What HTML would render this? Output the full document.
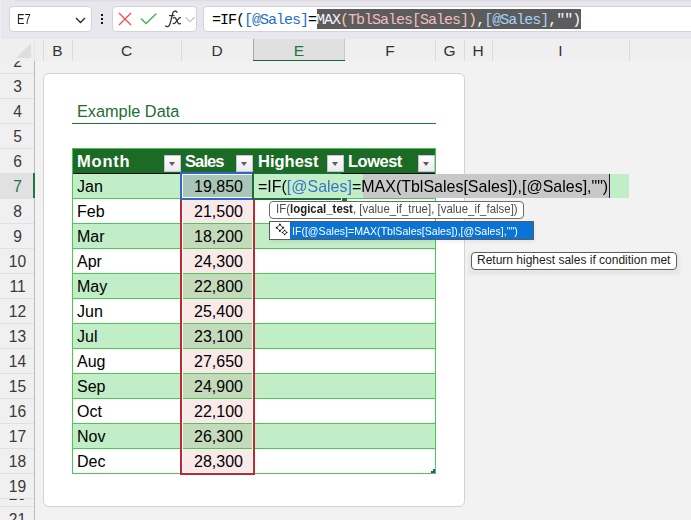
<!DOCTYPE html>
<html><head><meta charset="utf-8">
<style>
*{margin:0;padding:0;box-sizing:border-box}
html,body{width:691px;height:520px;overflow:hidden;background:#f2f2f2;font-family:"Liberation Sans",sans-serif}
body{position:relative}
.a{position:absolute}
.box{position:absolute;background:#fff;border:1px solid #d2d2d8;border-radius:4px}
.mono{font-family:"Liberation Mono",monospace}
.vl{position:absolute;width:1px;background:#dadada}
.hl{position:absolute;height:1px;background:#e0e0e0}
.ch{position:absolute;top:39px;height:22px;font-size:15.5px;color:#333;text-align:center;line-height:23px}
.rh{position:absolute;left:0;width:35px;height:25px;font-size:15.6px;color:#3a3a3a;text-align:center;line-height:27px}
.cell{position:absolute;font-size:16px;color:#000;line-height:25px;height:25px;white-space:nowrap}
.band{position:absolute;left:72px;width:364px;height:25px;background:#c1edc7}
.rl{position:absolute;left:72px;width:364px;height:1px;background:#4cc854}
.th{position:absolute;font-size:16.5px;font-weight:bold;color:#fff;line-height:25px;top:149px;white-space:nowrap}
.dd{position:absolute;top:155px;width:17px;height:17px;background:linear-gradient(#fefefe,#ececf0);border:1px solid #c4c2cc}
.dd:after{content:"";position:absolute;left:4px;top:6px;border-left:3.8px solid transparent;border-right:3.8px solid transparent;border-top:4.2px solid #5c5c5c}
.num{text-align:right;width:62px;left:181px}
</style></head><body>
<!-- top bar -->
<div class="a" style="left:0;top:0;width:691px;height:39px;background:#e7e7ed"></div>
<div class="a" style="left:14px;top:0;width:677px;height:2px;background:linear-gradient(#dcdce2,#e4e4ea)"></div>
<div class="a" style="left:0;top:0;width:1px;height:39px;background:#eeeef2"></div>
<div class="box" style="left:9px;top:6px;width:83px;height:26px"></div>
<div class="a" style="left:16.5px;top:11px;font-size:14px;color:#222;transform-origin:0 0;transform:scaleX(0.8)">E7</div>
<svg class="a" style="left:75px;top:17px" width="11" height="8"><path d="M1 1 L5.5 5.5 L10 1" fill="none" stroke="#222" stroke-width="1.25"/></svg>
<div class="a" style="left:101px;top:14px;width:2px;height:2px;background:#111"></div><div class="a" style="left:101px;top:18px;width:2px;height:2px;background:#111"></div><div class="a" style="left:101px;top:22px;width:2px;height:2px;background:#111"></div>
<div class="box" style="left:112px;top:6px;width:85px;height:26px"></div>
<svg class="a" style="left:118px;top:12px" width="14" height="14"><path d="M1 1 L13 13 M13 1 L1 13" stroke="#f04656" stroke-width="1.25"/></svg>
<svg class="a" style="left:140px;top:12px" width="18" height="14"><path d="M1 6.5 L6 11.5 L16.5 1.5" fill="none" stroke="#3cb548" stroke-width="1.3"/></svg>
<svg class="a" style="left:164px;top:9px" width="18" height="19"><path d="M13 3.2 C12.2 1.5 9.6 1.5 8.8 4 L6 14.8 C5.4 17.4 3.4 18.2 1.6 17" fill="none" stroke="#333" stroke-width="1.3" stroke-linecap="round"/><path d="M5 6.6 L10.6 6.6" stroke="#333" stroke-width="1.1"/><path d="M9.2 9 C10.4 8.2 11.6 8.6 12.2 10.2 L13.8 13.6 C14.4 15 15.4 15.2 16.4 14.4" fill="none" stroke="#333" stroke-width="1.25" stroke-linecap="round"/><path d="M16.4 8.6 C15.6 8.4 15.2 8.8 14.6 9.6 L11.2 13.8 C10.6 14.6 10 14.8 9.2 14.4" fill="none" stroke="#333" stroke-width="1.25" stroke-linecap="round"/></svg>
<svg class="a" style="left:184px;top:16px" width="12" height="8"><path d="M1.5 1.2 L6 5.7 L10.5 1.2" fill="none" stroke="#999" stroke-width="1"/></svg>
<div class="box" style="left:203px;top:6px;width:500px;height:26px"></div>
<div class="a" style="left:317px;top:9px;width:264px;height:20px;background:#5c5c5c"></div>
<div class="a mono" style="left:212px;top:10.5px;height:20px;line-height:20px;font-size:15px;letter-spacing:-1px;white-space:pre;color:#000">=IF(<span style="color:#1f6fc5">[@Sales]</span>=<span style="color:#f4f8ff">MAX<span style="color:#f8c8a0">(</span><span style="color:#f4bcc4">TblSales[Sales]</span><span style="color:#f8c8a0">)</span>,<span style="color:#a4d2fa">[@Sales]</span>,"")</span></div>

<!-- column header -->
<div class="a" style="left:0;top:39px;width:691px;height:22px;background:#efefef"></div>
<div class="a" style="left:253px;top:39px;width:92px;height:21px;background:#e0e0e0"></div>
<div class="a" style="left:253px;top:60px;width:92px;height:1px;background:#1a6b38"></div>
<svg class="a" style="left:16px;top:43px" width="16" height="16"><path d="M15 0 L15 15 L0 15 Z" fill="#dedede"/></svg>
<div class="vl" style="left:34px;top:40px;height:21px;background:#e4e4e4"></div>
<div class="vl" style="left:43px;top:40px;height:21px"></div>
<div class="vl" style="left:72px;top:40px;height:21px"></div>
<div class="vl" style="left:181px;top:40px;height:21px"></div>
<div class="vl" style="left:253px;top:39px;height:21px;background:#a8a8a8"></div>
<div class="vl" style="left:344px;top:39px;height:21px;background:#c8c8c8"></div>
<div class="vl" style="left:435px;top:40px;height:21px"></div>
<div class="vl" style="left:464px;top:40px;height:21px"></div>
<div class="vl" style="left:492px;top:40px;height:21px"></div>
<div class="vl" style="left:629px;top:40px;height:21px"></div>
<div class="ch" style="left:43px;width:29px">B</div>
<div class="ch" style="left:72px;width:109px">C</div>
<div class="ch" style="left:181px;width:72px">D</div>
<div class="ch" style="left:253px;width:92px;color:#217346">E</div>
<div class="ch" style="left:345px;width:90px">F</div>
<div class="ch" style="left:435px;width:29px">G</div>
<div class="ch" style="left:464px;width:28px">H</div>
<div class="ch" style="left:492px;width:137px">I</div>

<!-- row header -->
<div class="a" style="left:0;top:61px;width:34px;height:459px;background:#f0f0f0;overflow:hidden">
  <div class="rh" style="top:-13px">2</div>
  <div class="hl" style="left:0;top:12px;width:34px"></div>
  <div class="rh" style="top:12px">3</div>
  <div class="hl" style="left:0;top:37px;width:34px"></div>
  <div class="rh" style="top:37px">4</div>
  <div class="hl" style="left:0;top:62px;width:34px"></div>
  <div class="rh" style="top:62px">5</div>
  <div class="hl" style="left:0;top:87px;width:34px"></div>
  <div class="rh" style="top:87px">6</div>
  <div class="hl" style="left:0;top:112px;width:34px"></div>
  <div class="a" style="left:0;top:112px;width:34px;height:25px;background:#e1e1e1"></div>
  <div class="rh" style="top:112px;color:#217346">7</div>
  <div class="hl" style="left:0;top:137px;width:34px"></div>
  <div class="rh" style="top:137px">8</div>
  <div class="hl" style="left:0;top:162px;width:34px"></div>
  <div class="rh" style="top:162px">9</div>
  <div class="hl" style="left:0;top:187px;width:34px"></div>
  <div class="rh" style="top:187px">10</div>
  <div class="hl" style="left:0;top:212px;width:34px"></div>
  <div class="rh" style="top:212px">11</div>
  <div class="hl" style="left:0;top:237px;width:34px"></div>
  <div class="rh" style="top:237px">12</div>
  <div class="hl" style="left:0;top:262px;width:34px"></div>
  <div class="rh" style="top:262px">13</div>
  <div class="hl" style="left:0;top:287px;width:34px"></div>
  <div class="rh" style="top:287px">14</div>
  <div class="hl" style="left:0;top:312px;width:34px"></div>
  <div class="rh" style="top:312px">15</div>
  <div class="hl" style="left:0;top:337px;width:34px"></div>
  <div class="rh" style="top:337px">16</div>
  <div class="hl" style="left:0;top:362px;width:34px"></div>
  <div class="rh" style="top:362px">17</div>
  <div class="hl" style="left:0;top:387px;width:34px"></div>
  <div class="rh" style="top:387px">18</div>
  <div class="hl" style="left:0;top:412px;width:34px"></div>
  <div class="rh" style="top:412px">19</div>
  <div class="hl" style="left:0;top:437px;width:34px"></div>
  <div class="a" style="left:0;top:438px;width:34px;height:7px;overflow:hidden"><div class="rh" style="top:-18px">20</div></div>
  <div class="hl" style="left:0;top:445px;width:34px"></div>
  <div class="rh" style="top:445px">21</div>
</div>
<div class="vl" style="left:34px;top:61px;height:459px;background:#bdbdbd"></div>
<div class="a" style="left:33px;top:173px;width:2px;height:25px;background:#217346"></div>

<!-- card -->
<div class="a" style="left:43px;top:73px;width:422px;height:434px;background:#fff;border:1px solid #d2d2d2;border-radius:6px"></div>
<div class="a" style="left:77px;top:99px;font-size:16.3px;color:#1b6e35;line-height:25px">Example Data</div>
<div class="a" style="left:72px;top:123px;width:364px;height:1px;background:#217346"></div>

<!-- table -->
<div class="a" style="left:72px;top:148px;width:364px;height:25px;background:#1b6a25;border-top:1px solid #4cc050;border-left:1px solid #4cc050;border-right:1px solid #4cc050"></div>
<div class="th" style="left:77px;letter-spacing:0.8px">Month</div>
<div class="th" style="left:185px;letter-spacing:-0.9px">Sales</div>
<div class="th" style="left:258px">Highest</div>
<div class="th" style="left:348px;letter-spacing:-0.5px">Lowest</div>
<div class="dd" style="left:164px"></div>
<div class="dd" style="left:236px"></div>
<div class="dd" style="left:327px"></div>
<div class="dd" style="left:418px"></div>

<div class="band" style="top:173px"></div>
<div class="band" style="top:223px"></div>
<div class="band" style="top:273px"></div>
<div class="band" style="top:323px"></div>
<div class="band" style="top:373px"></div>
<div class="band" style="top:423px"></div>
<div class="rl" style="top:198px"></div>
<div class="rl" style="top:223px"></div>
<div class="rl" style="top:248px"></div>
<div class="rl" style="top:273px"></div>
<div class="rl" style="top:298px"></div>
<div class="rl" style="top:323px"></div>
<div class="rl" style="top:348px"></div>
<div class="rl" style="top:373px"></div>
<div class="rl" style="top:398px"></div>
<div class="rl" style="top:423px"></div>
<div class="rl" style="top:448px"></div>
<div class="rl" style="top:473px"></div>
<div class="a" style="left:72px;top:173px;width:364px;height:1px;background:#111"></div>
<div class="a" style="left:72px;top:173px;width:1px;height:301px;background:#4cc854"></div>
<div class="a" style="left:435px;top:173px;width:1px;height:301px;background:#4cc854"></div>
<div class="a" style="left:433px;top:469px;width:2px;height:4px;background:#3c4c9c"></div><div class="a" style="left:431px;top:471px;width:2px;height:2px;background:#3c4c9c"></div>

<!-- D overlays -->
<div class="a" style="left:180px;top:172px;width:75px;height:303px;border:2px solid #c0282f;background:#fff"></div>
<div class="a" style="left:183px;top:200px;width:69px;height:23px;background:#f9e9e9"></div>
<div class="a" style="left:183px;top:224px;width:69px;height:24px;background:#c4dbbb"></div>
<div class="a" style="left:183px;top:223px;width:69px;height:1px;background:#4cc854"></div>
<div class="a" style="left:183px;top:249px;width:69px;height:24px;background:#f9e9e9"></div>
<div class="a" style="left:183px;top:248px;width:69px;height:1px;background:#4cc854"></div>
<div class="a" style="left:183px;top:274px;width:69px;height:24px;background:#c4dbbb"></div>
<div class="a" style="left:183px;top:273px;width:69px;height:1px;background:#4cc854"></div>
<div class="a" style="left:183px;top:299px;width:69px;height:24px;background:#f9e9e9"></div>
<div class="a" style="left:183px;top:298px;width:69px;height:1px;background:#4cc854"></div>
<div class="a" style="left:183px;top:324px;width:69px;height:24px;background:#c4dbbb"></div>
<div class="a" style="left:183px;top:323px;width:69px;height:1px;background:#4cc854"></div>
<div class="a" style="left:183px;top:349px;width:69px;height:24px;background:#f9e9e9"></div>
<div class="a" style="left:183px;top:348px;width:69px;height:1px;background:#4cc854"></div>
<div class="a" style="left:183px;top:374px;width:69px;height:24px;background:#c4dbbb"></div>
<div class="a" style="left:183px;top:373px;width:69px;height:1px;background:#4cc854"></div>
<div class="a" style="left:183px;top:399px;width:69px;height:24px;background:#f9e9e9"></div>
<div class="a" style="left:183px;top:398px;width:69px;height:1px;background:#4cc854"></div>
<div class="a" style="left:183px;top:424px;width:69px;height:24px;background:#c4dbbb"></div>
<div class="a" style="left:183px;top:423px;width:69px;height:1px;background:#4cc854"></div>
<div class="a" style="left:183px;top:449px;width:69px;height:23px;background:#f9e9e9"></div>
<div class="a" style="left:183px;top:448px;width:69px;height:1px;background:#4cc854"></div>
<div class="a" style="left:180px;top:172px;width:74px;height:28px;border:2px solid #3366cc;background:#fff"></div>
<div class="a" style="left:183px;top:175px;width:71px;height:22px;background:#a7c6b8"></div>
<div class="cell" style="left:77px;top:174px">Jan</div>
<div class="cell" style="left:77px;top:199px">Feb</div>
<div class="cell" style="left:77px;top:224px">Mar</div>
<div class="cell" style="left:77px;top:249px">Apr</div>
<div class="cell" style="left:77px;top:274px">May</div>
<div class="cell" style="left:77px;top:299px">Jun</div>
<div class="cell" style="left:77px;top:324px">Jul</div>
<div class="cell" style="left:77px;top:349px">Aug</div>
<div class="cell" style="left:77px;top:374px">Sep</div>
<div class="cell" style="left:77px;top:399px">Oct</div>
<div class="cell" style="left:77px;top:424px">Nov</div>
<div class="cell" style="left:77px;top:449px">Dec</div>
<div class="cell num" style="top:174px">19,850</div>
<div class="cell num" style="top:199px">21,500</div>
<div class="cell num" style="top:224px">18,200</div>
<div class="cell num" style="top:249px">24,300</div>
<div class="cell num" style="top:274px">22,800</div>
<div class="cell num" style="top:299px">25,400</div>
<div class="cell num" style="top:324px">23,100</div>
<div class="cell num" style="top:349px">27,650</div>
<div class="cell num" style="top:374px">24,900</div>
<div class="cell num" style="top:399px">22,100</div>
<div class="cell num" style="top:424px">26,300</div>
<div class="cell num" style="top:449px">28,300</div>

<!-- edit cell E7 -->
<div class="a" style="left:252px;top:172px;width:89px;height:28px;border:2px solid #1d6b39;border-right:0"></div>
<div class="a" style="left:254px;top:174px;width:375px;height:24px;background:#c1edc7"></div>
<div class="a" style="left:341px;top:198px;width:1px;height:3px;background:#fff"></div><div class="a" style="left:342px;top:198px;width:5px;height:4px;background:#1d6b39"></div>
<div class="a" style="left:363px;top:174px;width:246px;height:24px;background:#c8c8c8"></div>
<div class="a" style="left:609px;top:174px;width:1px;height:24px;background:#301040"></div>
<div class="cell" style="left:258px;top:174px;font-size:17px;transform-origin:0 0;transform:scaleX(0.94)"><span>=IF(</span><span style="color:#3a74c4">[@Sales]</span><span>=MAX(TblSales[Sales]),[@Sales],"")</span></div>

<!-- tooltips -->
<div class="a" style="left:269px;top:201px;width:255px;height:18px;background:#fff;border:1px solid #6c6c6c;border-radius:4px"></div>
<div class="a" id="tt1" style="left:276px;top:200px;font-size:13px;line-height:17px;color:#4c4c4c;white-space:nowrap;transform-origin:0 0;transform:scaleX(0.88)">IF(<b style="color:#222">logical_test</b>, [value_if_true], [value_if_false])</div>
<div class="a" style="left:269px;top:221px;width:265px;height:19px;background:#fff;border:1px solid #5a5a5a;box-shadow:1px 2px 3px rgba(0,0,0,0.06)"></div>
<div class="a" style="left:290px;top:222px;width:243px;height:17px;background:#0a74d6"></div>
<svg class="a" style="left:270px;top:220px" width="20" height="20"><path d="M9.90,4.40 Q11.22,6.38 13.20,7.70 Q11.22,9.02 9.90,11.00 Q8.58,9.02 6.60,7.70 Q8.58,6.38 9.90,4.40 Z" fill="none" stroke="#111" stroke-width="0.9"/><circle cx="9.90" cy="4.40" r="0.9" fill="#111"/><circle cx="13.20" cy="7.70" r="0.9" fill="#111"/><circle cx="9.90" cy="11.00" r="0.9" fill="#111"/><circle cx="6.60" cy="7.70" r="0.9" fill="#111"/><path d="M14.60,10.20 Q15.48,11.52 16.80,12.40 Q15.48,13.28 14.60,14.60 Q13.72,13.28 12.40,12.40 Q13.72,11.52 14.60,10.20 Z" fill="none" stroke="#111" stroke-width="0.9"/><circle cx="14.60" cy="10.20" r="0.75" fill="#111"/><circle cx="16.80" cy="12.40" r="0.75" fill="#111"/><circle cx="14.60" cy="14.60" r="0.75" fill="#111"/><circle cx="12.40" cy="12.40" r="0.75" fill="#111"/></svg>
<div class="a" id="tt2" style="left:292px;top:222.5px;font-size:11.5px;line-height:17px;color:#fff;white-space:nowrap;transform-origin:0 0;transform:scaleX(0.92)">IF([@Sales]=MAX(TblSales[Sales]),[@Sales],"")</div>
<div class="a" style="left:468px;top:253px;width:212px;height:22px;background:rgba(0,0,0,0.045);filter:blur(1.5px)"></div>
<div class="a" style="left:471px;top:252px;width:206px;height:18px;background:#fff;border:1px solid #606060;border-radius:4px"></div>
<div class="a" id="tt3" style="left:477px;top:252px;font-size:12px;line-height:17px;color:#222;white-space:nowrap">Return highest sales if condition met</div>
</body></html>
